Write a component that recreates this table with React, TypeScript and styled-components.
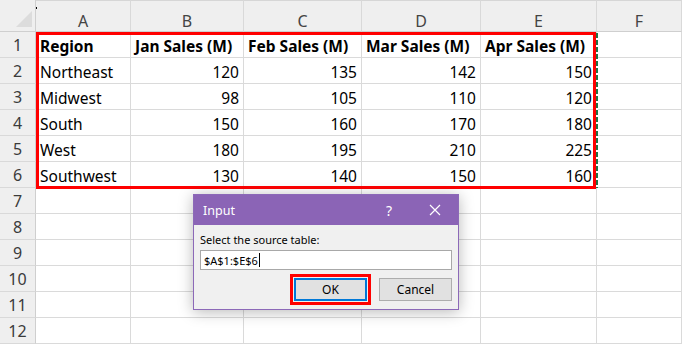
import React from 'react';
import styled, { createGlobalStyle } from 'styled-components';

const GlobalStyle = createGlobalStyle`
  html, body {
    margin: 0;
    padding: 0;
    background: #ffffff;
  }
  * {
    box-sizing: border-box;
  }
`;

const Screen = styled.div`
  position: relative;
  width: 682px;
  height: 344px;
  overflow: hidden;
  background: #ffffff;
  font-family: 'Noto Sans', 'Open Sans', sans-serif;
`;

const Sheet = styled.div`
  display: grid;
  grid-template-columns: 36px 95px 113px 118px 119px 116px 1fr;
  grid-template-rows: 32px repeat(12, 26px);
`;

const CornerCell = styled.div`
  background: #efefef;
  border-right: 1px solid #cfcfcf;
  border-bottom: 1px solid #cfcfcf;
  display: flex;
  align-items: flex-end;
  justify-content: flex-end;
  padding: 0 3px 4px 0;
`;

const ColHeader = styled.div`
  background: #efefef;
  border-right: 1px solid #d9d9d9;
  border-bottom: 1px solid #cfcfcf;
  border-top: 1px solid #d6d6d6;
  color: #444444;
  font-size: 16px;
  display: flex;
  align-items: center;
  justify-content: center;
  padding-top: 9px;
`;

const RowHeader = styled.div`
  background: #efefef;
  border-right: 1px solid #cfcfcf;
  border-bottom: 1px solid #d9d9d9;
  color: #3b3b3b;
  font-size: 16px;
  line-height: 25px;
  padding-top: 1px;
  text-align: center;
`;

const Cell = styled.div<{ $align?: 'left' | 'right'; $bold?: boolean }>`
  border-right: 1px solid #dadada;
  border-bottom: 1px solid #dadada;
  color: #000000;
  font-size: 15.5px;
  line-height: 21px;
  padding: 4px 4px 0;
  white-space: nowrap;
  text-align: ${({ $align }) => ($align === 'right' ? 'right' : 'left')};
  font-weight: ${({ $bold }) => ($bold ? 700 : 400)};
`;

const SelectionBox = styled.div`
  position: absolute;
  left: 36px;
  top: 32px;
  width: 560px;
  height: 157px;
  border: 3px solid #ff0000;
  pointer-events: none;
`;

const MarchingAnts = styled.div`
  position: absolute;
  left: 596px;
  top: 33px;
  width: 2px;
  height: 155px;
  background: repeating-linear-gradient(
    to bottom,
    #217346 0 5px,
    #ffffff 5px 7px
  );
`;

const CursorDot = styled.div`
  position: absolute;
  left: 36px;
  top: 7px;
  width: 1px;
  height: 2px;
  background: #000000;
`;

const Dialog = styled.div`
  position: absolute;
  left: 193px;
  top: 194px;
  width: 266px;
  height: 116px;
  background: #f0f0f0;
  border: 1px solid #8c69b8;
  box-shadow: 0 2px 14px rgba(0, 0, 0, 0.28);
  display: flex;
  flex-direction: column;
`;

const TitleBar = styled.div`
  height: 30px;
  background: #8b64b6;
  color: #ffffff;
  display: flex;
  align-items: center;
  padding-left: 9px;
  font-size: 12.5px;
`;

const Title = styled.span`
  flex: 1;
`;

const TitleButton = styled.span`
  width: 46px;
  height: 30px;
  display: flex;
  align-items: center;
  justify-content: center;
  font-size: 14px;
  color: #ffffff;
`;

const Body = styled.div`
  flex: 1;
  display: flex;
  flex-direction: column;
  padding: 7px 6px 0 6px;
`;

const Label = styled.div`
  font-size: 11px;
  line-height: 16px;
  color: #000000;
  margin-bottom: 2px;
`;

const InputBox = styled.div`
  height: 20px;
  width: 252px;
  background: #ffffff;
  border: 1px solid #a8a8a8;
  font-size: 11px;
  padding-left: 3px;
  color: #000000;
  display: flex;
  align-items: center;
`;

const Caret = styled.span`
  display: inline-block;
  width: 1px;
  height: 14px;
  background: #000000;
  margin-left: 1px;
`;

const ButtonRow = styled.div`
  display: flex;
  justify-content: flex-end;
  gap: 12px;
  margin-top: 8px;
`;

const Button = styled.div<{ $primary?: boolean; $marked?: boolean }>`
  width: 73px;
  height: 23px;
  background: #e1e1e1;
  border: ${({ $primary }) => ($primary ? '2px solid #0078d7' : '1px solid #adadad')};
  outline: ${({ $marked }) => ($marked ? '3px solid #ff0000' : 'none')};
  outline-offset: 1px;
  font-size: 12px;
  color: #000000;
  display: flex;
  align-items: center;
  justify-content: center;
`;

const columns = ['A', 'B', 'C', 'D', 'E', 'F'];

const header = ['Region', 'Jan Sales (M)', 'Feb Sales (M)', 'Mar Sales (M)', 'Apr Sales (M)'];

const rows: [string, number, number, number, number][] = [
  ['Northeast', 120, 135, 142, 150],
  ['Midwest', 98, 105, 110, 120],
  ['South', 150, 160, 170, 180],
  ['West', 180, 195, 210, 225],
  ['Southwest', 130, 140, 150, 160],
];

function SelectAllMark() {
  return (
    <svg width="16" height="16" viewBox="0 0 16 16">
      <polygon points="16,0 16,16 0,16" fill="#dcdcdc" />
    </svg>
  );
}

function CloseIcon() {
  return (
    <svg width="12" height="12" viewBox="0 0 12 12">
      <path d="M1 1 L11 11 M11 1 L1 11" stroke="#ffffff" strokeWidth="1.2" fill="none" />
    </svg>
  );
}

export default function App() {
  const body: React.ReactNode[] = [];

  for (let r = 1; r <= 12; r++) {
    body.push(<RowHeader key={`rh${r}`}>{r}</RowHeader>);
    for (let c = 0; c < 6; c++) {
      let content: React.ReactNode = '';
      let align: 'left' | 'right' = 'left';
      let bold = false;
      if (r === 1 && c < 5) {
        content = header[c];
        bold = true;
      } else if (r >= 2 && r <= 6 && c < 5) {
        const v = rows[r - 2][c];
        content = v;
        align = typeof v === 'number' ? 'right' : 'left';
      }
      body.push(
        <Cell key={`c${r}-${c}`} $align={align} $bold={bold}>
          {content}
        </Cell>
      );
    }
  }

  return (
    <Screen>
      <GlobalStyle />
      <Sheet>
        <CornerCell>
          <SelectAllMark />
        </CornerCell>
        {columns.map((col) => (
          <ColHeader key={col}>{col}</ColHeader>
        ))}
        {body}
      </Sheet>
      <CursorDot />
      <MarchingAnts />
      <SelectionBox />
      <Dialog>
        <TitleBar>
          <Title>Input</Title>
          <TitleButton>?</TitleButton>
          <TitleButton>
            <CloseIcon />
          </TitleButton>
        </TitleBar>
        <Body>
          <Label>Select the source table:</Label>
          <InputBox>
            $A$1:$E$6
            <Caret />
          </InputBox>
          <ButtonRow>
            <Button $primary $marked>OK</Button>
            <Button>Cancel</Button>
          </ButtonRow>
        </Body>
      </Dialog>
    </Screen>
  );
}
